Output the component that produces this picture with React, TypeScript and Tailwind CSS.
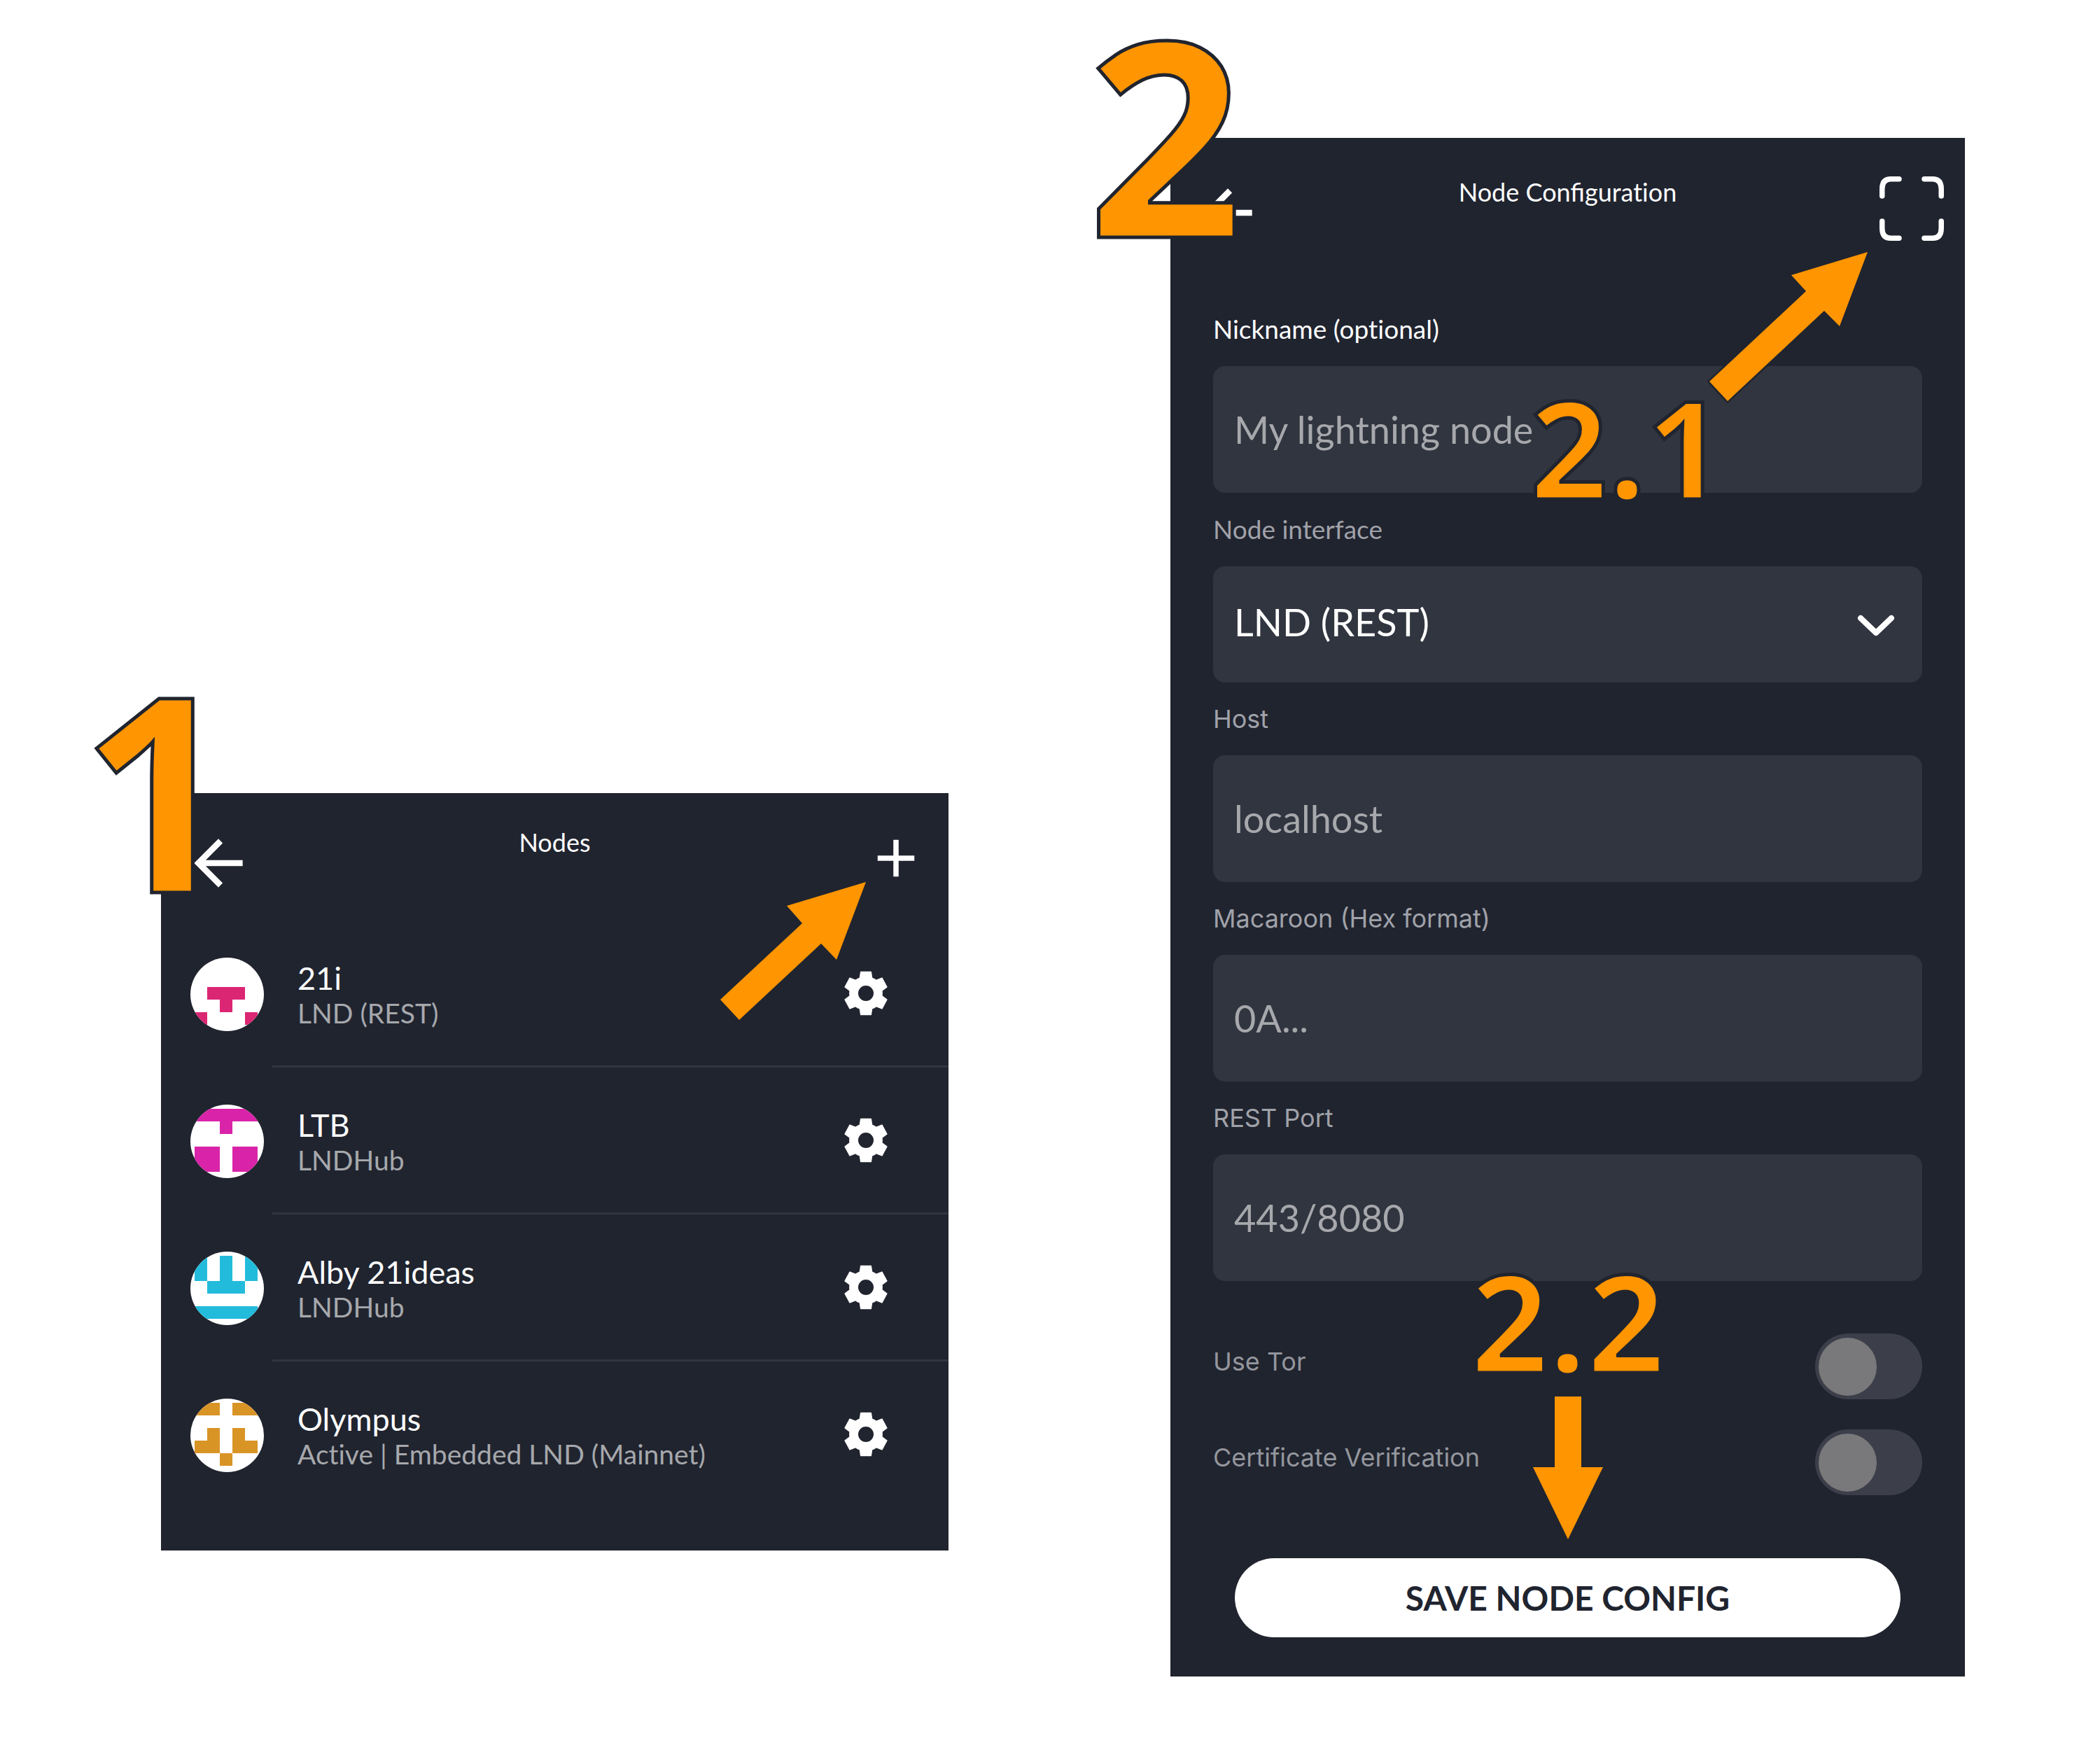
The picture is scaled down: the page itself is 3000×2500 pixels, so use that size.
import type { ReactNode } from "react";

type WalletNode = {
  name: string;
  detail: string;
  color: string;
  cells: string[];
};

const nodes: WalletNode[] = [
  {
    name: "21i",
    detail: "LND (REST)",
    color: "#db2674",
    cells: [".....", ".....", ".###.", "..#..", "#...#"],
  },
  {
    name: "LTB",
    detail: "LNDHub",
    color: "#d923a8",
    cells: ["#####", "..#..", ".....", "##.##", "##.##"],
  },
  {
    name: "Alby 21ideas",
    detail: "LNDHub",
    color: "#23bbdc",
    cells: ["#.#.#", "#.#.#", ".###.", ".....", "#####"],
  },
  {
    name: "Olympus",
    detail: "Active | Embedded LND (Mainnet)",
    color: "#d99426",
    cells: ["##.##", ".....", ".#.#.", "##.##", "..#.."],
  },
];

function BackIcon() {
  return (
    <svg viewBox="0 0 24 24" className="size-[104px]" fill="#ffffff" aria-hidden="true">
      <path d="M20 11H7.83l5.59-5.59L12 4l-8 8 8 8 1.41-1.41L7.83 13H20v-2z" />
    </svg>
  );
}

function PlusIcon() {
  return (
    <svg viewBox="0 0 24 24" className="size-[90px]" fill="#ffffff" aria-hidden="true">
      <path d="M19 13h-6v6h-2v-6H5v-2h6V5h2v6h6v2z" />
    </svg>
  );
}

function ScanIcon() {
  return (
    <svg
      viewBox="0 0 92 92"
      className="size-[92px]"
      fill="none"
      stroke="#ffffff"
      strokeWidth="7.5"
      strokeLinecap="round"
      aria-hidden="true"
    >
      <path d="M3.75 28V18Q3.75 3.75 16 3.75H28" />
      <path d="M64 3.75H76Q88.250 3.75 88.250 18V28" />
      <path d="M88.250 64V74Q88.250 88.250 76 88.250H64" />
      <path d="M28 88.250H16Q3.75 88.250 3.75 74V64" />
    </svg>
  );
}

function GearIcon() {
  return (
    <svg viewBox="-96 -96 192 192" className="size-16" aria-hidden="true">
      <path
        fill="#ffffff"
        fillRule="evenodd"
        stroke="#ffffff"
        strokeWidth="4"
        strokeLinejoin="round"
        d="M-22 -92H22L26 -66Q36 -62 44 -56L69 -66L90 -27L69 -11Q70 0 69 11L90 27L69 66L44 56Q36 62 26 66L22 92H-22L-26 66Q-36 62 -44 56L-69 66L-90 27L-69 11Q-70 0 -69 -11L-90 -27L-69 -66L-44 -56Q-36 -62 -26 -66ZM0 -35A35 35 0 1 0 0 35A35 35 0 1 0 0 -35Z"
      />
    </svg>
  );
}

function Avatar({ node }: { node: WalletNode }) {
  return (
    <svg viewBox="0 0 105 105" className="size-[105px] rounded-full bg-white" aria-hidden="true">
      {node.cells.flatMap((row, y) =>
        [...row].map((cell, x) =>
          cell === "#" ? (
            <rect
              key={`${x}-${y}`}
              x={6 + x * 18}
              y={6 + y * 18}
              width="18"
              height="18"
              fill={node.color}
              shapeRendering="crispEdges"
            />
          ) : null,
        ),
      )}
    </svg>
  );
}

function Step({ children, className }: { children: ReactNode; className: string }) {
  return (
    <span
      className={`pointer-events-none absolute font-['Open_Sans',sans-serif] leading-none font-bold whitespace-nowrap text-[#ff9500] [-webkit-text-stroke:5px_#20242f] ${className}`}
    >
      {children}
    </span>
  );
}

function NodeRow({ node, last }: { node: WalletNode; last: boolean }) {
  return (
    <li className="flex h-[210px] items-stretch pl-[42px]">
      <div className="flex shrink-0 items-center pr-3">
        <Avatar node={node} />
      </div>
      <div
        className={`flex flex-1 items-center justify-between border-b-[3px] pr-[86px] pl-9 ${
          last ? "border-transparent" : "border-[#31353f]"
        }`}
      >
        <div>
          <p className="text-[45px] leading-[56px] text-white">{node.name}</p>
          <p className="text-[39px] leading-[44px] text-[#a6a8ac] [font-variant-ligatures:none]">
            {node.detail}
          </p>
        </div>
        <button type="button" aria-label={`Settings for ${node.name}`}>
          <GearIcon />
        </button>
      </div>
    </li>
  );
}

function NodesPanel() {
  return (
    <section className="relative mb-[180px] self-end bg-[#20242f] pb-[60px]">
      <header className="grid grid-cols-[1fr_auto_1fr] items-start px-[30px] pt-12 pb-[30px]">
        <button type="button" aria-label="Back" className="justify-self-start">
          <BackIcon />
        </button>
        <h1 className="text-[36px] leading-[44px] text-white">Nodes</h1>
        <button type="button" aria-label="Add node" className="justify-self-end">
          <PlusIcon />
        </button>
      </header>
      <ul>
        {nodes.map((node, i) => (
          <NodeRow key={node.name} node={node} last={i === nodes.length - 1} />
        ))}
      </ul>
      <Step className="top-[-202px] left-[-115px] text-[388px]">1</Step>
      <svg
        viewBox="0 0 210 200"
        className="pointer-events-none absolute top-[126px] right-[117px] h-[200px] w-[210px]"
        aria-hidden="true"
      >
        <path fill="#ff9500" d="M209 1L96 35L118 60L1 169L28 198L145 89L167 112Z" />
      </svg>
    </section>
  );
}

const fieldBox =
  "w-full rounded-[17px] bg-[#31353f] px-[30px] text-[54px] leading-[66px] placeholder:text-[#a6a8ac] placeholder:opacity-100";
const latoLabel =
  "mb-[31px] block text-[37px] leading-[44px] [font-variant-ligatures:none]";
const plainLabel =
  "mb-[30px] block font-['Inter',sans-serif] text-[36px] leading-[44px] text-[#a0a2a9]";

function TextField({
  id,
  label,
  placeholder,
  labelClass,
}: {
  id: string;
  label: string;
  placeholder: string;
  labelClass: string;
}) {
  return (
    <div>
      <label htmlFor={id} className={labelClass}>
        {label}
      </label>
      <input
        id={id}
        type="text"
        placeholder={placeholder}
        className={`${fieldBox} block h-[181px] text-white`}
      />
    </div>
  );
}

function Toggle({ id, label }: { id: string; label: string }) {
  return (
    <div className="flex items-center justify-between">
      <label
        htmlFor={id}
        className="pb-[14px] font-['Inter',sans-serif] text-[36px] leading-[44px] text-[#94969d]"
      >
        {label}
      </label>
      <input
        id={id}
        type="checkbox"
        role="switch"
        className="flex h-[94px] w-[153px] appearance-none items-center rounded-full bg-[#3c3f4a] pl-[5px] before:size-[83px] before:rounded-full before:bg-[#79787a] before:content-[''] checked:justify-end checked:pr-[5px]"
      />
    </div>
  );
}

function ConfigPanel() {
  return (
    <section className="relative self-start bg-[#20242f] pb-14">
      <header className="grid grid-cols-[1fr_auto_1fr] items-start px-[30px] pt-[55px] pb-[61px]">
        <button type="button" aria-label="Back" className="justify-self-start">
          <BackIcon />
        </button>
        <h1 className="text-[36px] leading-[44px] text-white">
          Node Confi<span className="[font-variant-ligatures:none]">guration</span>
        </h1>
        <button type="button" aria-label="Scan code" className="justify-self-end">
          <ScanIcon />
        </button>
      </header>
      <form className="px-[61px] pt-[31px]">
        <div className="flex flex-col gap-[30px]">
          <TextField
            id="nickname"
            label="Nickname (optional)"
            placeholder="My lightning node"
            labelClass={`${latoLabel} text-white`}
          />
          <div>
            <label htmlFor="interface" className={`${latoLabel} text-[#a0a2a9]`}>
              Node interface
            </label>
            <div className="relative">
              <select
                id="interface"
                defaultValue="lnd"
                className={`${fieldBox} block h-[166px] appearance-none pb-[6px] text-white`}
              >
                <option value="lnd">LND (REST)</option>
              </select>
              <svg
                viewBox="0 0 54 32"
                className="pointer-events-none absolute top-[69px] right-[39px] h-8 w-[54px]"
                fill="none"
                stroke="#ffffff"
                strokeWidth="8"
                strokeLinecap="round"
                strokeLinejoin="round"
                aria-hidden="true"
              >
                <path d="M5 5L27 26L49 5" />
              </svg>
            </div>
          </div>
          <TextField id="host" label="Host" placeholder="localhost" labelClass={plainLabel} />
          <TextField
            id="macaroon"
            label="Macaroon (Hex format)"
            placeholder="0A..."
            labelClass={plainLabel}
          />
          <TextField id="port" label="REST Port" placeholder="443/8080" labelClass={plainLabel} />
        </div>
        <div className="mt-[75px] flex flex-col gap-[43px]">
          <Toggle id="tor" label="Use Tor" />
          <Toggle id="certificate" label="Certificate Verification" />
        </div>
        <div className="mt-[90px] px-[31px]">
          <button
            type="button"
            className="h-[113px] w-full rounded-full bg-white text-[48px] leading-[58px] font-bold text-[#20242f]"
          >
            SAVE NODE CONFIG
          </button>
        </div>
      </form>
      <Step className="top-[-202px] left-[-118px] text-[388px]">2</Step>
      <svg
        viewBox="0 0 236 224"
        className="pointer-events-none absolute top-[158px] right-[134px] h-[224px] w-[236px]"
        aria-hidden="true"
      >
        <path
          fill="#ff9500"
          stroke="#20242f"
          strokeWidth="5"
          paintOrder="stroke"
          d="M231 5L122 38L143 61L5 190L31 218L169 89L191 111Z"
        />
      </svg>
      <Step className="top-[344px] right-[344px] text-[194px]">2.1</Step>
      <Step className="top-[1592px] left-1/2 -translate-x-1/2 text-[194px]">2.2</Step>
      <svg
        viewBox="0 0 102 206"
        className="pointer-events-none absolute top-[1797px] left-1/2 h-[206px] w-[102px] -translate-x-1/2"
        aria-hidden="true"
      >
        <path fill="#ff9500" d="M32 1H70V102H101L51 205L1 102H32Z" />
      </svg>
    </section>
  );
}

export default function App() {
  return (
    <main className="grid min-h-screen grid-cols-[1125fr_1135fr] gap-[317px] bg-white pt-[197px] pr-[193px] pl-[230px] pb-[105px] font-['Lato',sans-serif]">
      <NodesPanel />
      <ConfigPanel />
    </main>
  );
}
